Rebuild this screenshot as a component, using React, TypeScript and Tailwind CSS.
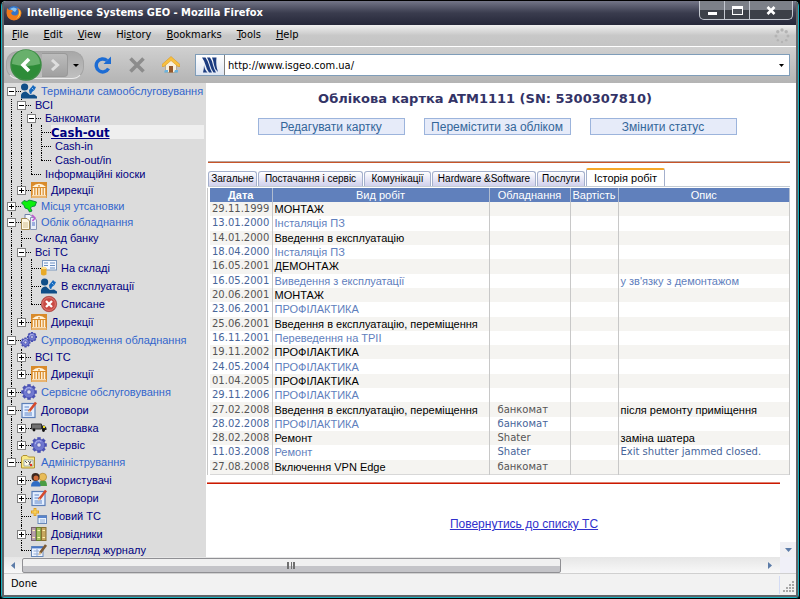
import React from "react";

type IconName =
  | "user" | "bank" | "map" | "docs" | "form" | "remove" | "gears" | "gear"
  | "contract" | "truck" | "folder" | "users" | "newItem" | "books" | "journal";

type Node = {
  depth: number;
  label: string;
  size: "xs" | "sm" | "md" | "lg";
  toggle?: "+" | "-";
  icon?: IconName;
  tone?: "section" | "current";
};

const nodes: Node[] = [
  { depth: 0, label: "Термінали самообслуговування", size: "md", toggle: "-", icon: "user", tone: "section" },
  { depth: 1, label: "ВСІ", size: "xs", toggle: "-" },
  { depth: 2, label: "Банкомати", size: "xs", toggle: "-" },
  { depth: 3, label: "Cash-out", size: "sm", tone: "current" },
  { depth: 3, label: "Cash-in", size: "sm" },
  { depth: 3, label: "Cash-out/in", size: "sm" },
  { depth: 2, label: "Інформаційні кіоски", size: "sm" },
  { depth: 1, label: "Дирекції", size: "lg", toggle: "+", icon: "bank" },
  { depth: 0, label: "Місця утсановки", size: "sm", toggle: "+", icon: "map", tone: "section" },
  { depth: 0, label: "Облік обладнання", size: "lg", toggle: "-", icon: "docs", tone: "section" },
  { depth: 1, label: "Склад банку", size: "sm" },
  { depth: 1, label: "Всі ТС", size: "sm", toggle: "-" },
  { depth: 2, label: "На складі", size: "lg", icon: "form" },
  { depth: 2, label: "В експлуатації", size: "lg", icon: "user" },
  { depth: 2, label: "Списане", size: "lg", icon: "remove" },
  { depth: 1, label: "Дирекції", size: "lg", toggle: "+", icon: "bank" },
  { depth: 0, label: "Супроводження обладнання", size: "lg", toggle: "-", icon: "gears", tone: "section" },
  { depth: 1, label: "ВСІ ТС", size: "md", toggle: "+" },
  { depth: 1, label: "Дирекції", size: "lg", toggle: "+", icon: "bank" },
  { depth: 0, label: "Сервісне обслуговування", size: "lg", toggle: "+", icon: "gear", tone: "section" },
  { depth: 0, label: "Договори", size: "lg", toggle: "-", icon: "contract" },
  { depth: 1, label: "Поставка", size: "lg", toggle: "+", icon: "truck" },
  { depth: 1, label: "Сервіс", size: "md", toggle: "+", icon: "gear" },
  { depth: 0, label: "Адміністрування", size: "lg", toggle: "-", icon: "folder", tone: "section" },
  { depth: 1, label: "Користувачі", size: "lg", toggle: "+", icon: "users" },
  { depth: 1, label: "Договори", size: "lg", toggle: "+", icon: "contract" },
  { depth: 1, label: "Новий ТС", size: "lg", icon: "newItem" },
  { depth: 1, label: "Довідники", size: "lg", toggle: "+", icon: "books" },
  { depth: 1, label: "Перегляд журналу", size: "sm", icon: "journal" },
];

const rowHeight = { xs: "h-[13px]", sm: "h-[14px]", md: "h-[16px]", lg: "h-[18px]" };

// A column keeps its dotted line while a later sibling exists at that depth.
function continues(index: number, depth: number) {
  for (let i = index + 1; i < nodes.length; i++) {
    if (nodes[i].depth < depth) return false;
    if (nodes[i].depth === depth) return true;
  }
  return false;
}

const gearTeeth = [0, 45, 90, 135, 180, 225, 270, 315];

function Gear({ x, y, r }: { x: number; y: number; r: number }) {
  return (
    <g>
      {gearTeeth.map((a) => (
        <rect key={a} x={x - r * 0.22} y={y - r} width={r * 0.44} height={r} fill="#4a52b4" transform={`rotate(${a} ${x} ${y})`} />
      ))}
      <circle cx={x} cy={y} r={r * 0.76} fill="#7078d0" stroke="#4048a8" strokeWidth="0.7" />
      <path d={`M${x - r * 0.5} ${y - r * 0.1}A${r * 0.5} ${r * 0.5} 0 0 1 ${x + r * 0.3} ${y - r * 0.45}`} stroke="#b4b8f0" strokeWidth="1" fill="none" />
      <circle cx={x} cy={y} r={r * 0.28} fill="#dcdcf0" stroke="#4048a8" strokeWidth="0.6" />
    </g>
  );
}

function Icon({ name }: { name: IconName }) {
  return (
    <svg viewBox="0 0 16 16" className="h-4 w-4 shrink-0 overflow-visible" aria-hidden="true">
      {name === "user" && (
        <>
          <circle cx="3.6" cy="4" r="3.6" fill="#114f88" />
          <path d="M0 15.500V12Q1 8.500 5 8.500L9 12L13 11.500L16 13.500V15.500Z" fill="#114f88" />
          <path d="M8 7L11 3.500L12 2L13.500 3.500L15 4L13.500 7L11 9L10 11.500L8.500 10Z" fill="#1769bd" />
          <path d="M11 5L12.500 6.500" stroke="#8fc4f4" strokeWidth="1" />
        </>
      )}
      {name === "bank" && (
        <>
          <rect width="16" height="16" fill="#d98b2b" />
          <path d="M1 5Q8 -1.500 15 5Z" fill="#fff3dc" />
          <circle cx="8" cy="3.800" r="0.900" fill="#d98b2b" />
          <path d="M2.500 6V13M5.200 6V13M8 6V13M10.800 6V13M13.500 6V13" stroke="#fff3dc" strokeWidth="1.500" />
          <path d="M1 13.500H15M0.500 15H15.500" stroke="#fff3dc" strokeWidth="0.800" />
        </>
      )}
      {name === "map" && (
        <path d="M0.500 5L3 2.500L6 3.500L8 2L12 3L15.500 4L14 8L11 8.500L9.500 10L11 13L8.500 14L7 11L4 10L3 7.500Z" fill="#0cf00c" stroke="#088038" strokeWidth="0.900" />
      )}
      {name === "docs" && (
        <>
          <path d="M4 0.500H9L11 2.500V11H4Z" fill="#f5f7fc" stroke="#7080a8" />
          <path d="M9.500 3.500H13L15.500 6V15.500H9.500Z" fill="#e8eef8" stroke="#8794b4" />
          <path d="M11 1L14 4L11.500 7" stroke="#c058d0" strokeWidth="1.600" fill="none" />
          <path d="M0.500 4.500H6L8.500 7V15.500H0.500Z" fill="#fff8e4" stroke="#a08850" />
          <path d="M2 9H7M2 11H7M2 13H7" stroke="#c8b078" strokeWidth="0.800" />
          <path d="M11 9H14M11 11H14" stroke="#5070c8" />
        </>
      )}
      {name === "form" && (
        <>
          <rect x="1.500" y="0.500" width="14" height="9.500" fill="#f4f8ff" stroke="#7b98bd" />
          <path d="M3 3H7M9 3H14M3 5.500H7M9 5.500H14M9 8H14" stroke="#6a8fc0" />
          <path d="M0 8V14.500Q2.500 16.500 5.500 14.500V8Z" fill="#e8aa28" />
          <ellipse cx="2.750" cy="8" rx="2.750" ry="1.300" fill="#ffe08a" />
        </>
      )}
      {name === "remove" && (
        <>
          <circle cx="8" cy="8" r="7.700" fill="#c84a44" stroke="#9c3430" strokeWidth="0.600" />
          <circle cx="8" cy="8" r="6.400" fill="none" stroke="#e89088" strokeWidth="0.700" />
          <path d="M5 5L11 11M11 5L5 11" stroke="#fff" strokeWidth="2.300" />
        </>
      )}
      {name === "gears" && (<><Gear x={4.5} y={10.5} r={5} /><Gear x={11} y={5} r={5} /></>)}
      {name === "gear" && <Gear x={8} y={8} r={7.8} />}
      {name === "contract" && (
        <>
          <rect x="1" y="1.500" width="13" height="14" fill="#e4efff" stroke="#5c7fb8" strokeWidth="1.200" />
          <path d="M3.500 5H8M3.500 8H8M3.500 11H11M3.500 13H11" stroke="#5c84c8" />
          <path d="M15 0.500L8 9.500" stroke="#d44a2c" strokeWidth="2.600" />
          <path d="M8.500 8L6.800 11L9.800 9.500Z" fill="#f4c890" />
        </>
      )}
      {name === "truck" && (
        <>
          <path d="M0.500 4H10.500V9H0.500Z" fill="#707070" stroke="#333" />
          <path d="M11 5.500H13.500L15.500 8V10H11Z" fill="#222" />
          <rect x="12" y="6" width="2" height="2" fill="#f0e020" />
          <circle cx="3" cy="10" r="1.400" fill="#111" /><circle cx="12.500" cy="10.500" r="1.400" fill="#111" />
        </>
      )}
      {name === "folder" && (
        <>
          <path d="M0.500 3L2 1.500H6L7.500 3H13.500V14H0.500Z" fill="#f8e884" stroke="#b09030" />
          <path d="M3 6H12V12H3Z" fill="#fffbe4" stroke="#88a0b0" strokeWidth="0.800" />
          <path d="M4 7L6 9M7 7L9 9M10 7L8 11" stroke="#555" />
          <circle cx="10" cy="11" r="1.200" fill="#e03020" />
        </>
      )}
      {name === "users" && (
        <>
          <path d="M8 14Q8 8 12 8Q16 8 16 14Z" fill="#4a9c44" />
          <circle cx="11.800" cy="5" r="3.800" fill="#e8bc58" stroke="#a87820" strokeWidth="0.600" />
          <path d="M0 14.500Q0 9 5 9Q9.500 9 9.500 14.500Z" fill="#2f6cc4" />
          <circle cx="4.500" cy="5" r="4" fill="#3c2820" /><circle cx="5" cy="6" r="2.500" fill="#d06a38" />
        </>
      )}
      {name === "newItem" && (
        <>
          <path d="M4 0V8M0 4H8" stroke="#e0a020" strokeWidth="2.800" /><path d="M4 1V7M1 4H7" stroke="#ffe070" />
          <rect x="7" y="7.500" width="8.500" height="8" fill="#e8f2ff" stroke="#6888b8" />
          <path d="M7 9H15.500" stroke="#4878c8" strokeWidth="1.800" />
          <path d="M9 12H14M9 14H14" stroke="#90acd8" />
        </>
      )}
      {name === "books" && (
        <>
          <rect x="0.500" y="1.500" width="4.500" height="13" fill="#b8a0a8" stroke="#786070" />
          <rect x="5.500" y="1.500" width="4.500" height="13" fill="#a4c060" stroke="#688030" />
          <rect x="10.500" y="1.500" width="4.500" height="13" fill="#c8a860" stroke="#887030" />
          <path d="M1.500 4.500H4M6.500 4.500H9M11.500 4.500H14M1.500 11.500H4M6.500 11.500H9M11.500 11.500H14" stroke="#fff4b0" />
        </>
      )}
      {name === "journal" && (
        <>
          <rect x="0.500" y="4.500" width="11.500" height="10" fill="#eef4ff" stroke="#6888b8" />
          <path d="M1 5.500H12" stroke="#4878c8" strokeWidth="1.800" />
          <path d="M2.500 9H8M2.500 12H10M6 7V14" stroke="#90acd8" />
          <path d="M15 3L9 11" stroke="#7c5a34" strokeWidth="2.600" /><path d="M9 10L7 13.500L10.500 11.500Z" fill="#e8c080" />
        </>
      )}
    </svg>
  );
}

function TreeRow({ node, index }: { node: Node; index: number }) {
  const current = node.tone === "current";
  return (
    <li className={`flex items-center ${rowHeight[node.size]}`}>
      {Array.from({ length: node.depth }, (_, d) => (
        <span key={d} className="h-full w-[10px] shrink-0 pl-1">
          {continues(index, d) && <span className="block h-full w-0 border-l border-dotted border-black" />}
        </span>
      ))}
      <span className="relative flex h-full w-[14px] shrink-0 items-center pl-1">
        {index > 0 && (
          <span className={`absolute top-0 left-1 border-l border-dotted border-black ${continues(index, node.depth) ? "h-full" : "h-1/2"}`} />
        )}
        <span className="w-full border-t border-dotted border-black" />
        {node.toggle && (
          <button
            aria-label={`${node.toggle === "+" ? "Розгорнути" : "Згорнути"}: ${node.label}`}
            className="absolute left-0 flex h-[9px] w-[9px] items-center justify-center border border-[#808080] bg-white"
          >
            <svg viewBox="0 0 5 5" className="h-[5px] w-[5px]" shapeRendering="crispEdges">
              <path d={node.toggle === "+" ? "M0 2H5V3H0ZM2 0H3V5H2Z" : "M0 2H5V3H0Z"} />
            </svg>
          </button>
        )}
      </span>
      {node.icon && <Icon name={node.icon} />}
      <a
        href="#"
        className={
          current
            ? "flex h-full flex-1 items-center bg-[#efefef] font-['DejaVu_Sans_Condensed',sans-serif] text-[13px] leading-none font-bold text-[#000080] underline"
            : node.tone === "section"
              ? "pl-1 whitespace-nowrap text-[#3366cc]"
              : "pl-1 whitespace-nowrap text-[#000080]"
        }
      >
        {node.label}
      </a>
    </li>
  );
}

const menus = [["", "F", "ile"], ["", "E", "dit"], ["", "V", "iew"], ["Hi", "s", "tory"], ["", "B", "ookmarks"], ["", "T", "ools"], ["", "H", "elp"]];

const tabs = [
  { label: "Загальне", width: "w-[49px]" },
  { label: "Постачання і сервіс", width: "w-[105px]" },
  { label: "Комунікації", width: "w-[67px]" },
  { label: "Hardware &Software", width: "w-[104px]" },
  { label: "Послуги", width: "w-[48px]" },
];

type Work = { date: string; kind: string; device?: string; note?: string };
const works: Work[] = [
  { date: "29.11.1999", kind: "МОНТАЖ" },
  { date: "13.01.2000", kind: "Інсталяція ПЗ" },
  { date: "14.01.2000", kind: "Введення в експлуатацію" },
  { date: "18.04.2000", kind: "Інсталяція ПЗ" },
  { date: "16.05.2001", kind: "ДЕМОНТАЖ" },
  { date: "16.05.2001", kind: "Виведення з експлуатації", note: "у зв'язку з демонтажом" },
  { date: "20.06.2001", kind: "МОНТАЖ" },
  { date: "23.06.2001", kind: "ПРОФІЛАКТИКА" },
  { date: "25.06.2001", kind: "Введення в експлуатацію, переміщення" },
  { date: "16.11.2001", kind: "Переведення на ТРІІ" },
  { date: "19.11.2002", kind: "ПРОФІЛАКТИКА" },
  { date: "24.05.2004", kind: "ПРОФІЛАКТИКА" },
  { date: "01.04.2005", kind: "ПРОФІЛАКТИКА" },
  { date: "29.11.2006", kind: "ПРОФІЛАКТИКА" },
  { date: "27.02.2008", kind: "Введення в експлуатацію, переміщення", device: "банкомат", note: "після ремонту приміщення" },
  { date: "28.02.2008", kind: "ПРОФІЛАКТИКА", device: "банкомат" },
  { date: "28.02.2008", kind: "Ремонт", device: "Shater", note: "заміна шатера" },
  { date: "11.03.2008", kind: "Ремонт", device: "Shater", note: "Exit shutter jammed closed." },
  { date: "27.08.2008", kind: "Включення VPN Edge", device: "банкомат" },
];

function TitleBar() {
  return (
    <header className="flex h-6 shrink-0 items-center bg-linear-to-b from-[#747688] via-[#3a3c4e] to-[#26283a] pl-[2px]">
      <svg viewBox="0 0 16 16" className="h-4 w-4" aria-hidden="true">
        <circle cx="8" cy="8" r="7" fill="#3474c8" />
        <path d="M4 4Q8 1 11 4L9 7Z" fill="#8cc4f0" />
        <path d="M1 3L3 5Q5 4 7 6L5 8Q6 11 10 10.500Q13 9.500 12.500 6L11 3Q15 4 15.500 8Q15 15 8 15.500Q1 15 0.500 8Z" fill="#ee7a1c" />
        <path d="M14 5Q16 11 10 14Q14 10 13 6Z" fill="#fcd040" />
      </svg>
      <h1 className="flex-1 pl-[5px] font-['DejaVu_Sans_Condensed',sans-serif] text-[11px] font-bold text-white">
        Intelligence Systems GEO - Mozilla Firefox
      </h1>
      <div className="mr-[3px] flex h-[19px] self-start overflow-hidden rounded-b-[5px] border border-t-0 border-[#c4c8d0] bg-linear-to-b from-[#7c8088] from-50% to-[#3c4048] to-50%">
        <button aria-label="Згорнути вікно" className="flex w-[25px] items-end justify-center border-r border-[#c4c8d0] pb-1">
          <span className="h-[3px] w-[9px] bg-white" />
        </button>
        <button aria-label="Розгорнути вікно" className="flex w-[25px] items-center justify-center border-r border-[#c4c8d0]">
          <span className="h-[9px] w-[11px] border border-t-[3px] border-white bg-[#50545c]" />
        </button>
        <button aria-label="Закрити вікно" className="flex w-[42px] items-center justify-center">
          <svg viewBox="0 0 10 9" className="h-[9px] w-[10px]"><path d="M1.500 1L8.500 8M8.500 1L1.500 8" stroke="#fff" strokeWidth="2.600" /></svg>
        </button>
      </div>
    </header>
  );
}

function Toolbar() {
  return (
    <div className="flex h-[36px] shrink-0 items-center bg-linear-to-b from-[#d0d0d0] to-[#b4b4b4] pr-[6px] pl-[2px]">
      <div className="flex h-7 w-[78px] items-center rounded-[12px] border border-[#a4a4a4] border-b-[#ececec] bg-linear-to-b from-[#a8a8a8] to-[#c0c0c0] pl-[3px]">
        <button aria-label="Назад" className="-my-1 h-8 w-8 shrink-0">
          <svg viewBox="0 0 32 32" className="h-8 w-8">
            <circle cx="16" cy="16" r="15" fill="#2e8c38" stroke="#3c8c44" strokeWidth="1.500" />
            <path d="M2 15A14 14 0 0 1 30 15Q16 19 2 15Z" fill="#68b06c" />
            <path d="M19 10L13 16L19 22" stroke="#fff" strokeWidth="3.600" fill="none" />
          </svg>
        </button>
        <button aria-label="Вперед" className="flex h-6 w-[26px] items-center justify-center rounded-r-[4px] border border-l-0 border-[#999] bg-linear-to-b from-[#bcbcbc] to-[#a0a0a0]">
          <svg viewBox="0 0 12 12" className="h-3 w-3"><path d="M3 1L8.500 6L3 11" stroke="#dedede" strokeWidth="3" fill="none" /></svg>
        </button>
        <button aria-label="Історія переходів" className="flex flex-1 justify-center">
          <svg viewBox="0 0 6 3" className="h-[3px] w-[6px]"><path d="M0 0H6L3 3Z" /></svg>
        </button>
      </div>
      <button aria-label="Оновити" className="ml-[10px] h-[18px] w-[18px]">
        <svg viewBox="0 0 18 18"><path d="M14.500 12.500A6.500 6.500 0 1 1 13 4.500" stroke="#1c6cd4" strokeWidth="3.400" fill="none" /><path d="M17 0.500V8H9.500Z" fill="#1c6cd4" /></svg>
      </button>
      <button aria-label="Зупинити" className="ml-4 h-[18px] w-[18px]">
        <svg viewBox="0 0 18 18"><path d="M2.500 2.500L15.500 15.500M15.500 2.500L2.500 15.500" stroke="#8c8c8c" strokeWidth="3.600" /></svg>
      </button>
      <button aria-label="Домівка" className="ml-4 h-[18px] w-[18px]">
        <svg viewBox="0 0 18 18">
          <path d="M3.500 8L9 3L14.500 8V16.500H3.500Z" fill="#f8f0dc" stroke="#a8987c" strokeWidth="0.700" />
          <path d="M0 10.500V8.500L9 0.500L18 8.500V10.500H16L9 4.500L2 10.500Z" fill="#f8c040" stroke="#d89820" strokeWidth="0.600" />
          <rect x="7" y="10" width="4" height="6.500" fill="#94582c" />
          <path d="M12 16.500H16V14H13ZM2 16.500H6V14H3Z" fill="#6cb4e0" />
        </svg>
      </button>
      <div className="ml-[15px] flex h-[22px] flex-1 border border-[#7f9db9] bg-white">
        <span className="flex w-[29px] shrink-0 items-center justify-center border-r border-[#808080] bg-linear-to-b from-white to-[#dfe6f2]">
          <svg viewBox="0 0 16 16" className="h-4 w-4" aria-hidden="true">
            <path d="M0 0.500H3.500Q6 4 7 8Q8 12 10 15.500H7Q4.500 12 3.500 8Q2.500 4 0 0.500Z" fill="#1c3c80" />
            <path d="M5 0.500H8Q10.500 4 11 8Q12 12 14 15.500H11.500Q9 12 8 8Q7 4 5 0.500Z" fill="#1c3c80" />
            <path d="M10 0.500H14.500Q13.500 8 16 15Q12.500 12 12 8Q11.500 4 10 0.500Z" fill="#1c3c80" />
            <path d="M2 8Q2.500 13 5.500 15.500H1Q2 12 2 8Z" fill="#1c3c80" />
          </svg>
        </span>
        <input aria-label="Адреса" defaultValue="http://www.isgeo.com.ua/" className="min-w-0 flex-1 bg-white px-[3px] pt-[2px] font-['DejaVu_Sans_Condensed',sans-serif] text-[11px] text-black outline-none" />
        <button aria-label="Список адрес" className="flex w-4 items-center justify-center">
          <svg viewBox="0 0 5 3" className="h-[3px] w-[5px]"><path d="M0 0H5L2.500 3Z" /></svg>
        </button>
      </div>
    </div>
  );
}

function Card() {
  return (
    <main className="flex min-w-0 flex-1 flex-col bg-white">
      <h2 className="mt-2 pr-8 text-center font-['DejaVu_Sans',sans-serif] text-[13px] leading-4 font-bold text-[#333366]">
        Облікова картка ATM1111 (SN: 5300307810)
      </h2>
      <div className="mt-[11px] flex justify-center gap-[19px] pr-2">
        {["Редагувати картку", "Перемістити за обліком", "Змінити статус"].map((label) => (
          <button key={label} className="h-[17px] w-[147px] border border-[#9cb4dc] bg-[#e6ebf9] text-[12px] leading-[14px] whitespace-nowrap text-[#336699]">
            {label}
          </button>
        ))}
      </div>
      <hr className="mt-[26px] mr-[6px] ml-[2px] h-[2px] border-t border-[#b8a49c] bg-[#c85428]" />

      <div role="tablist" className="mt-[6px] mr-[6px] ml-[2px] flex h-[18px] items-end gap-px border-b border-[#c4ccd4] text-[11px] leading-none text-black">
        {tabs.map((tab) => (
          <button key={tab.label} role="tab" aria-selected={false} className={`h-[15px] overflow-hidden rounded-t-[3px] border border-b-0 border-[#a4b0cc] bg-linear-to-b from-white to-[#d0d0ec] text-[10px] whitespace-nowrap ${tab.width}`}>
            {tab.label}
          </button>
        ))}
        <button role="tab" aria-selected className="h-[18px] w-[79px] rounded-t-[2px] border-x border-t-2 border-x-[#a4b0cc] border-t-[#f4a828] bg-white whitespace-nowrap">
          Історія робіт
        </button>
      </div>

      <div className="mt-px mr-[6px] ml-[1px] border-l border-[#c8c8c8] pl-[2px]">
        <table className="h-[287px] w-full table-fixed border-collapse text-[11px] leading-[14px]">
          <colgroup>
            <col className="w-[62px]" /><col className="w-[217px]" /><col className="w-[81px]" /><col className="w-[48px]" /><col />
          </colgroup>
          <thead>
            <tr className="h-[14px] bg-[#6080bc] text-white">
              {["Дата", "Вид робіт", "Обладнання", "Вартість", "Опис"].map((title, i) => (
                <th key={title} scope="col" className={`border-r border-[#b0bcd0] p-0 ${i === 0 ? "font-bold" : "font-normal"}`}>{title}</th>
              ))}
            </tr>
          </thead>
          <tbody className="border-b border-[#d8d8d8] font-normal">
            {works.map((work, i) => {
              const odd = i % 2 === 1;
              return (
                <tr key={i} className={odd ? "bg-white text-[#5f80bd]" : "bg-[#f5f4f1] text-black"}>
                  <td className={`border-r border-[#c8c8c8] p-0 pl-[2px] font-['DejaVu_Sans',sans-serif] text-[10px] ${odd ? "text-[#47659a]" : "text-[#555]"}`}>{work.date}</td>
                  <td className="border-r border-[#c8c8c8] p-0 pl-[2px] whitespace-nowrap">{work.kind}</td>
                  <td className={`border-r border-[#c8c8c8] p-0 pl-2 font-['DejaVu_Sans',sans-serif] text-[10px] ${odd ? "text-[#47659a]" : "text-[#555]"}`}>{work.device}</td>
                  <td className="border-r border-[#c8c8c8] p-0" />
                  <td className={`border-r border-[#c8c8c8] p-0 pl-[2px] whitespace-nowrap ${work.note?.startsWith("Exit") ? "font-['DejaVu_Sans',sans-serif] text-[10px] text-[#47659a]" : ""}`}>{work.note}</td>
                </tr>
              );
            })}
          </tbody>
        </table>
      </div>

      <hr className="mt-[7px] mr-4 ml-px h-[2px] border-t border-[#e08070] bg-[#cc1800]" />
      <p className="mt-8 pl-[46px] text-center text-[12px] leading-4">
        <a href="#" className="text-[#3030cc] underline">Повернутись до списку ТС</a>
      </p>
      <button aria-label="Прокрутити вниз" className="mt-auto flex h-[15px] w-4 items-center justify-center self-end bg-[#f0f0f4]">
        <svg viewBox="0 0 7 4" className="h-1 w-[7px]"><path d="M0 0H7L3.500 4Z" fill="#5c7ca8" /></svg>
      </button>
    </main>
  );
}

export default function App() {
  return (
    <div className="min-h-screen bg-black font-['Liberation_Sans',Arial,sans-serif] text-[11px] text-black">
      <div className="flex min-h-screen flex-col overflow-hidden rounded-t-[6px] rounded-b-[4px] border border-black bg-[#18b0c0] px-px pb-px">
        <div className="flex flex-1 flex-col border-x-2 border-b-2 border-[#606468] bg-[#f2f2f2]">
          <TitleBar />
          <nav aria-label="Меню" className="flex h-[22px] shrink-0 items-center gap-[15px] border-b border-white bg-linear-to-b from-[#f0f0f0] via-[#c8c8c8] to-[#c4c4c4] pr-[6px] pl-2 font-['DejaVu_Sans_Condensed',sans-serif]">
            {menus.map(([before, key, after]) => (
              <button key={before + key + after}>{before}<u>{key}</u>{after}</button>
            ))}
            <svg viewBox="0 0 16 16" className="ml-auto h-4 w-4" fill="#b4b4b4" aria-hidden="true">
              <circle cx="8" cy="2" r="1.700" /><circle cx="12.200" cy="3.800" r="1.700" /><circle cx="14" cy="8" r="1.500" /><circle cx="12.200" cy="12.200" r="1.300" />
              <circle cx="8" cy="14" r="1.200" /><circle cx="3.800" cy="12.200" r="1.200" /><circle cx="2" cy="8" r="1.500" /><circle cx="3.800" cy="3.800" r="1.700" />
            </svg>
          </nav>
          <Toolbar />
          <div className="flex flex-1">
            <nav aria-label="Дерево розділів" className="w-[202px] shrink-0 overflow-hidden bg-[#dcdcdc]">
              <ul className="pr-[2px] pl-[3px] leading-none">
                {nodes.map((node, i) => <TreeRow key={i} node={node} index={i} />)}
              </ul>
            </nav>
            <Card />
          </div>
          <div className="flex h-4 shrink-0 items-center bg-linear-to-b from-[#e6e6e6] to-[#f8f8f8]">
            <button aria-label="Прокрутити ліворуч" className="flex w-[18px] justify-center">
              <svg viewBox="0 0 4 7" className="h-[7px] w-1"><path d="M4 0V7L0 3.500Z" fill="#5c7ca8" /></svg>
            </button>
            <div className="flex-1">
              <div className="flex h-[15px] w-[73%] items-center justify-center rounded-[2px] border border-[#909094] bg-linear-to-b from-[#f0f0f0] from-50% to-[#c4c4c8] to-50%">
                <span className="h-[7px] w-2 border-x-2 border-[#707070] px-px"><span className="mx-auto block h-full w-px bg-[#707070]" /></span>
              </div>
            </div>
            <button aria-label="Прокрутити праворуч" className="flex w-5 justify-center">
              <svg viewBox="0 0 4 7" className="h-[7px] w-1"><path d="M0 0V7L4 3.500Z" fill="#5c7ca8" /></svg>
            </button>
            <span className="h-full w-4 bg-[#f0f0f8]" />
          </div>
          <footer className="flex h-[22px] shrink-0 items-center justify-between border-t border-[#d0d0d0] bg-[#f2f2f2] pl-[7px] font-['DejaVu_Sans_Condensed',sans-serif]">
            <span>Done</span>
            <svg viewBox="0 0 17 18" className="h-[18px] w-[17px]" aria-hidden="true">
              <path d="M0.500 0V18" stroke="#d4dcf4" />
              <path d="M13 5h2v2h-2zM10 8h2v2h-2zM13 8h2v2h-2zM7 11h2v2h-2zM10 11h2v2h-2zM13 11h2v2h-2zM4 14h2v2h-2zM7 14h2v2h-2zM10 14h2v2h-2zM13 14h2v2h-2z" fill="#a8a8a8" />
            </svg>
          </footer>
        </div>
      </div>
    </div>
  );
}
